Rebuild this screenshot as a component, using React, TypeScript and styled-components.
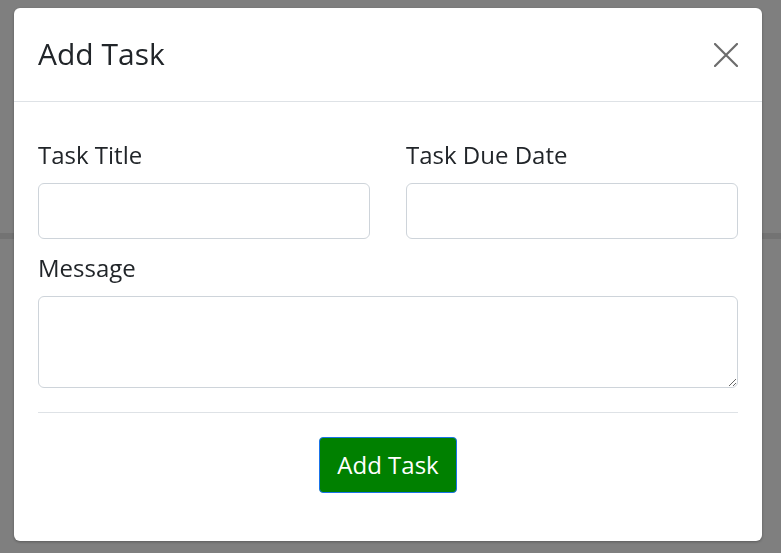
import React from 'react'
import styled, { createGlobalStyle } from 'styled-components'

const GlobalStyle = createGlobalStyle`
  html, body {
    margin: 0;
    padding: 0;
    background: #fff;
    font-family: 'Open Sans', 'Noto Sans', sans-serif;
    color: #212529;
  }
  * {
    box-sizing: border-box;
  }
`

const Page = styled.div`
  min-height: 553px;
  background: #fff;
`

const PageHeader = styled.header`
  height: 239px;
  border-bottom: 6px solid #e6e6e6;
`

const Overlay = styled.div`
  position: fixed;
  inset: 0;
  background: rgba(0, 0, 0, 0.5);
  padding: 8px 0 0 14px;
`

const Modal = styled.div`
  width: 748px;
  background: #fff;
  border-radius: 6px;
  box-shadow: 0 1px 3px rgba(0, 0, 0, 0.3);
`

const ModalHeader = styled.div`
  display: flex;
  align-items: flex-start;
  justify-content: space-between;
  padding: 28px 24px 29px 24px;
  border-bottom: 1px solid #dee2e6;
`

const ModalTitle = styled.h2`
  margin: 0;
  font-size: 30px;
  font-weight: 400;
  line-height: 36px;
  color: #212529;
`

const CloseButton = styled.button`
  display: flex;
  padding: 0;
  margin-top: 7px;
  border: none;
  background: none;
  cursor: pointer;
`

const ModalBody = styled.form`
  display: flex;
  flex-direction: column;
  padding: 35px 24px 48px;
`

const Row = styled.div<{ $cols: number }>`
  display: grid;
  grid-template-columns: repeat(${p => p.$cols}, 1fr);
  column-gap: 36px;
  margin-bottom: ${p => (p.$cols > 1 ? '11px' : '0')};
`

const Field = styled.div`
  display: flex;
  flex-direction: column;
`

const Label = styled.label`
  font-size: 24px;
  line-height: 36px;
  color: #212529;
  margin-bottom: 10px;
`

const Input = styled.input`
  height: 56px;
  border: 1px solid #ced4da;
  border-radius: 6px;
  font: inherit;
  font-size: 22px;
  padding: 0 12px;
  outline: none;
`

const TextArea = styled.textarea`
  height: 92px;
  border: 1px solid #ced4da;
  border-radius: 6px;
  font: inherit;
  font-size: 22px;
  padding: 8px 12px;
  outline: none;
`

const Divider = styled.hr`
  margin: 24px 0;
  border: none;
  border-top: 1px solid #dee2e6;
`

const Actions = styled.div`
  display: flex;
  justify-content: center;
`

const SubmitButton = styled.button`
  height: 56px;
  padding: 0 17.5px;
  background: #008000;
  color: #fff;
  border: 1px solid #1a73e8;
  border-radius: 4px;
  font-family: inherit;
  font-size: 24px;
  line-height: 36px;
  cursor: pointer;
`

function CloseIcon() {
  return (
    <svg width="24" height="24" viewBox="0 0 24 24">
      <path
        d="M1 1 L23 23 M23 1 L1 23"
        stroke="#6c6c6c"
        strokeWidth="2.2"
        strokeLinecap="round"
        fill="none"
      />
    </svg>
  )
}

export default function App() {
  return (
    <>
      <GlobalStyle />
      <Page>
        <PageHeader />
      </Page>
      <Overlay>
        <Modal role="dialog">
          <ModalHeader>
            <ModalTitle>Add Task</ModalTitle>
            <CloseButton aria-label="Close">
              <CloseIcon />
            </CloseButton>
          </ModalHeader>
          <ModalBody onSubmit={e => e.preventDefault()}>
            <Row $cols={2}>
              <Field>
                <Label htmlFor="title">Task Title</Label>
                <Input id="title" type="text" />
              </Field>
              <Field>
                <Label htmlFor="due">Task Due Date</Label>
                <Input id="due" type="text" />
              </Field>
            </Row>
            <Row $cols={1}>
              <Field>
                <Label htmlFor="message">Message</Label>
                <TextArea id="message" />
              </Field>
            </Row>
            <Divider />
            <Actions>
              <SubmitButton type="submit">Add Task</SubmitButton>
            </Actions>
          </ModalBody>
        </Modal>
      </Overlay>
    </>
  )
}
